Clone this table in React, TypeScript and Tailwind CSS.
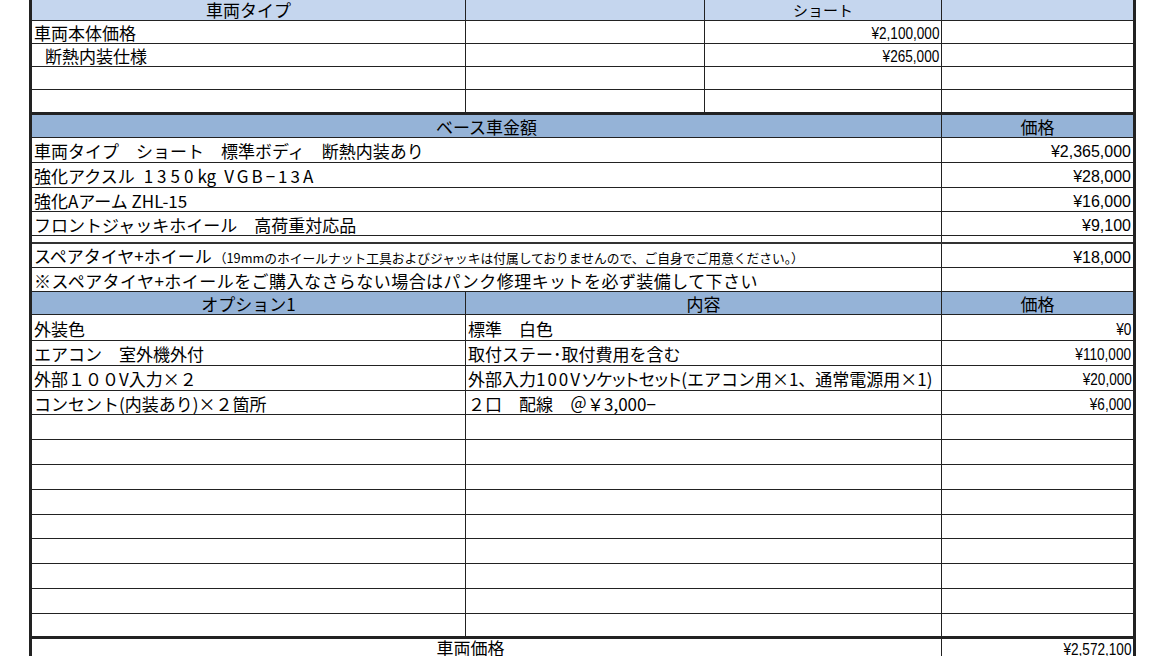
import React from "react";

// column widths include each cell's right border
const c1 = "w-[434px] border-r";
const c2 = "w-[239px] border-r";
const c3 = "w-[237px] border-r";
const c4 = "w-[191px]";
const c123 = "w-[910px] border-r";
const c23 = "w-[476px] border-r";

const hdr1 = "bg-[#c5d6ee]";
const hdr2 = "bg-[#95b3d7]";

const Cell: React.FC<{ className: string; children?: React.ReactNode }> = ({ className, children }) => (
  <div className={`flex shrink-0 items-center whitespace-nowrap border-[#222] pt-[2px] ${className}`}>
    {children !== undefined && <span>{children}</span>}
  </div>
);

const Price: React.FC<{ v: string; narrow?: boolean }> = ({ v, narrow }) =>
  narrow ? (
    <span className="inline-block origin-right scale-x-[0.8] pr-[2px] font-['Liberation_Sans',sans-serif] text-[17px]">
      {v}
    </span>
  ) : (
    <span className="pr-[2px] font-['Liberation_Sans',sans-serif] text-[16px]">{v}</span>
  );

const options = [
  { h: "h-[26px]", name: "外装色", body: <>標準　白色</>, price: "¥0" },
  { h: "h-[25px]", name: "エアコン　室外機外付", body: <>取付ステー･取付費用を含む</>, price: "¥110,000" },
  {
    h: "h-[25px]",
    name: "外部１００V入力×２",
    body: (
      <>
        外部入力<span className="tracking-[2px]">100V</span>
        <span className="[font-feature-settings:'palt']">ソケットセット</span>(エアコン用×1、通常電源用×1)
      </>
    ),
    price: "¥20,000",
  },
  { h: "h-[24px]", name: "コンセント(内装あり)×２箇所", body: <>２口　配線　＠￥3,000−</>, price: "¥6,000" },
  { h: "h-[25px]" },
  { h: "h-[25px]" },
  { h: "h-[25px]" },
  { h: "h-[25px]" },
  { h: "h-[24px]" },
  { h: "h-[25px]" },
  { h: "h-[25px]" },
  { h: "h-[25px]" },
];

const App: React.FC = () => {
  return (
    <div className="h-[656px] w-[1170px] overflow-hidden bg-white text-[17px] leading-[20px] text-black font-['Noto_Sans_CJK_JP',sans-serif]">
      <div className="ml-[29px] w-[1107px] border-x-[3px] border-[#222]">
        {/* // *車両タイプ ======== */}
        <div className={`flex h-[21px] border-b border-[#222] ${hdr1}`}>
          <Cell className={`${c1} justify-center !pt-0`}>車両タイプ</Cell>
          <Cell className={c2} />
          <Cell className={`${c3} justify-center !pt-0 text-[15px]`}>ショート</Cell>
          <Cell className={c4} />
        </div>
        <div className="flex h-[23px] border-b border-[#222]">
          <Cell className={`${c1} pl-[2px]`}>車両本体価格</Cell>
          <Cell className={c2} />
          <Cell className={`${c3} justify-end`}>
            <Price v="¥2,100,000" narrow />
          </Cell>
          <Cell className={c4} />
        </div>
        <div className="flex h-[23px] border-b border-[#222]">
          <Cell className={`${c1} pl-[13px]`}>断熱内装仕様</Cell>
          <Cell className={c2} />
          <Cell className={`${c3} justify-end`}>
            <Price v="¥265,000" narrow />
          </Cell>
          <Cell className={c4} />
        </div>
        <div className="flex h-[23px] border-b border-[#222]">
          <Cell className={c1} />
          <Cell className={c2} />
          <Cell className={c3} />
          <Cell className={c4} />
        </div>
        <div className="flex h-[25px] border-b-[3px] border-[#222]">
          <Cell className={c1} />
          <Cell className={c2} />
          <Cell className={c3} />
          <Cell className={c4} />
        </div>

        {/* // *ベース車金額 ======== */}
        <div className={`flex h-[23px] border-b border-[#222] ${hdr2}`}>
          <Cell className={`${c123} justify-center`}>ベース車金額</Cell>
          <Cell className={`${c4} justify-center`}>価格</Cell>
        </div>
        <div className="flex h-[25px] border-b border-[#222]">
          <Cell className={`${c123} pl-[2px]`}>車両タイプ　ショート　標準ボディ　断熱内装あり</Cell>
          <Cell className={`${c4} justify-end`}>
            <Price v="¥2,365,000" />
          </Cell>
        </div>
        <div className="flex h-[25px] border-b border-[#222]">
          <Cell className={`${c123} pl-[2px]`}>
            強化アクスル
            <span className="ml-[9px] tracking-[4px]">1350</span>kg
            <span className="ml-[8px] tracking-[3px]">VGB−13A</span>
          </Cell>
          <Cell className={`${c4} justify-end`}>
            <Price v="¥28,000" />
          </Cell>
        </div>
        <div className="flex h-[24px] border-b border-[#222]">
          <Cell className={`${c123} pl-[2px]`}>強化Aアーム ZHL-15</Cell>
          <Cell className={`${c4} justify-end`}>
            <Price v="¥16,000" />
          </Cell>
        </div>
        <div className="flex h-[24px] border-b border-[#222]">
          <Cell className={`${c123} pl-[2px]`}>フロントジャッキホイール　高荷重対応品</Cell>
          <Cell className={`${c4} justify-end`}>
            <Price v="¥9,100" />
          </Cell>
        </div>
        <div className="flex h-[8px] border-b-2 border-[#333]">
          <Cell className={c123} />
          <Cell className={c4} />
        </div>
        <div className="flex h-[24px] border-b border-[#222]">
          <Cell className={`${c123} pl-[2px]`}>
            スペアタイヤ+ホイール
            <span className="pl-[2px] text-[12.75px]">
              （19mmのホイールナット工具およびジャッキは付属しておりませんので、ご自身でご用意ください。）
            </span>
          </Cell>
          <Cell className={`${c4} justify-end`}>
            <Price v="¥18,000" />
          </Cell>
        </div>
        <div className="flex h-[24px] border-b border-[#222]">
          <Cell className={`${c123} pl-[2px] tracking-[0.45px]`}>
            ※スペアタイヤ+ホイールをご購入なさらない場合はパンク修理キットを必ず装備して下さい
          </Cell>
          <Cell className={c4} />
        </div>

        {/* // *オプション ======== */}
        <div className={`flex h-[23px] border-b border-[#222] ${hdr2}`}>
          <Cell className={`${c1} justify-center`}>オプション1</Cell>
          <Cell className={`${c23} justify-center`}>内容</Cell>
          <Cell className={`${c4} justify-center`}>価格</Cell>
        </div>
        {options.map((o, i) => (
          <div key={i} className={`flex ${o.h} border-b border-[#222]`}>
            <Cell className={`${c1} pl-[2px]`}>{o.name}</Cell>
            <Cell className={`${c23} pl-[2px]`}>{o.body}</Cell>
            <Cell className={`${c4} justify-end`}>{o.price && <Price v={o.price} narrow />}</Cell>
          </div>
        ))}
        <div className="flex h-[25px] border-b-[3px] border-[#222]">
          <Cell className={c1} />
          <Cell className={c23} />
          <Cell className={c4} />
        </div>

        {/* // *車両価格 ======== */}
        <div className="flex h-[18px] leading-[17px]">
          <Cell className={`${c123} justify-center !items-start !pt-0 pr-[32px]`}>車両価格</Cell>
          <Cell className={`${c4} justify-end !items-start !pt-0`}>
            <Price v="¥2,572,100" narrow />
          </Cell>
        </div>
      </div>
    </div>
  );
};

export default App;
